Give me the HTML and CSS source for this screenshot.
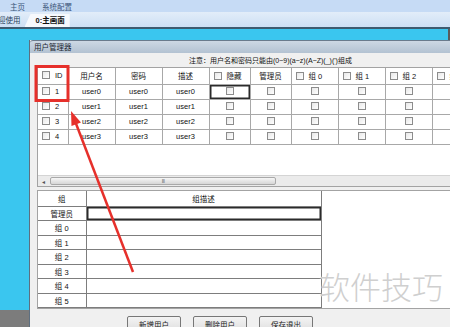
FILE: index.html
```html
<!DOCTYPE html>
<html lang="zh">
<head>
  <meta charset="UTF-8">
  <title>用户管理器</title>
  <link rel="stylesheet" href="styles.css">
</head>
<body>
  <div class="menubar">
    <span class="menu-item">主页</span>
    <span class="menu-item">系统配置</span>
  </div>
  <div class="tabbar">
    <span class="tab">迎使用</span>
    <span class="tab active">0:主画面</span>
  </div>
  <div class="desk">
    <div class="desk-top"></div>
    <div class="desk-main">
      <div class="desk-side">
        <div class="side-cyan"></div>
        <div class="side-grey"></div>
      </div>
      <div class="window">
        <div class="win-title">用户管理器</div>
        <div class="win-body">
          <div class="note">注意：用户名和密码只能由(0~9)(a~z)(A~Z)(_)(')组成</div>

          <div class="panel user-panel">
            <table class="grid users">
              <colgroup>
                <col style="width:30px"><col style="width:47px"><col style="width:47px"><col style="width:47px">
                <col style="width:41px"><col style="width:41px"><col style="width:47px"><col style="width:47px">
                <col style="width:47px"><col style="width:47px">
              </colgroup>
              <thead>
                <tr>
                  <th class="left"><span class="cb"></span>ID</th>
                  <th>用户名</th>
                  <th>密码</th>
                  <th>描述</th>
                  <th class="left"><span class="cb"></span>隐藏</th>
                  <th>管理员</th>
                  <th class="left"><span class="cb"></span>组 0</th>
                  <th class="left"><span class="cb"></span>组 1</th>
                  <th class="left"><span class="cb"></span>组 2</th>
                  <th class="left"><span class="cb"></span>组 3</th>
                </tr>
              </thead>
              <tbody id="user-rows"></tbody>
            </table>
            <div class="spacer"></div>
            <div class="hscroll">
              <span class="arrow">◂</span>
              <div class="thumb"><span class="grip">III</span></div>
            </div>
          </div>

          <div class="panel group-panel">
            <table class="grid groups">
              <colgroup><col style="width:48px"><col style="width:235px"></colgroup>
              <thead>
                <tr><th>组</th><th>组描述</th></tr>
              </thead>
              <tbody id="group-rows"></tbody>
            </table>
          </div>

          <div class="actions">
            <button class="btn">新增用户</button>
            <button class="btn">删除用户</button>
            <button class="btn">保存退出</button>
          </div>
        </div>
      </div>
    </div>
  </div>

  <svg class="annot" width="450" height="327" viewBox="0 0 450 327">
    <rect x="36" y="66.5" width="32" height="34" fill="none" stroke="#e6302b" stroke-width="3"/>
    <line x1="133" y1="272" x2="75" y2="121" stroke="#e6302b" stroke-width="2.5"/>
    <polygon points="71,111 81,122.5 71.5,126" fill="#e6302b"/>
  </svg>
  <div class="watermark">软件技巧</div>

  <script>
    // 用户表
    const users = ['user0', 'user1', 'user2', 'user3'];
    const ubody = document.getElementById('user-rows');
    users.forEach((u, i) => {
      const tr = document.createElement('tr');
      const sel = i === 0 ? ' class="sel"' : '';
      tr.innerHTML = `<td class="left"><span class="cb"></span>${i + 1}</td>
                      <td>${u}</td><td>${u}</td><td>${u}</td>
                      <td${sel}><span class="cb"></span></td>
                      <td><span class="cb"></span></td>
                      <td><span class="cb"></span></td>
                      <td><span class="cb"></span></td>
                      <td><span class="cb"></span></td>
                      <td><span class="cb"></span></td>`;
      ubody.appendChild(tr);
    });

    // 组表
    const groups = ['管理员', '组 0', '组 1', '组 2', '组 3', '组 4', '组 5'];
    const gbody = document.getElementById('group-rows');
    groups.forEach((g, i) => {
      const tr = document.createElement('tr');
      tr.innerHTML = `<td>${g}</td><td${i === 0 ? ' class="sel"' : ''}></td>`;
      gbody.appendChild(tr);
    });
  </script>
</body>
</html>
```

FILE: styles.css
```css
body {
  margin: 0;
  width: 450px;
  height: 327px;
  overflow: hidden;
  position: relative;
  font-family: "Liberation Sans", "Noto Sans CJK SC", sans-serif;
  font-size: 7.5px;
  color: #111;
  background: #3ac6ef;
}

.menubar {
  height: 12px;
  background: #c6dbf5;
  display: flex;
  align-items: center;
  gap: 17px;
  padding-left: 10px;
}
.menu-item { color: #3a5478; }

.tabbar {
  height: 15px;
  background: linear-gradient(#e2edf9, #cddff4);
  display: flex;
  align-items: flex-end;
}
.tab {
  height: 13px;
  line-height: 13px;
  padding: 0 2px 0 0;
  color: #2a3f5c;
  margin-left: -2px;
}
.tab.active {
  background: #f6f9fd;
  color: #111;
  padding: 0 5px 0 11px;
  margin-left: 2px;
  clip-path: polygon(6px 0, 100% 0, 100% 100%, 0 100%);
  font-weight: bold;
}

.desk { border-top: 2px solid #3e5b70; }
.desk-top {
  height: 11px;
  background: #3ac6ef;
  border-right: 2px solid #5b5b5b;
}
.desk-main { display: flex; height: 287px; }
.desk-side { width: 29px; display: flex; flex-direction: column; flex-shrink: 0; }
.side-cyan { flex: 1; background: #3ac6ef; }
.side-grey { height: 17px; background: #7c7c7c; }

.window {
  flex: 1;
  display: flex;
  flex-direction: column;
  border-left: 1px solid #5d6f80;
  background: #f0f0f0;
  min-width: 0;
}
.win-title {
  height: 13px;
  line-height: 13px;
  padding-left: 4px;
  background: linear-gradient(#cdd8e4, #b3c2d2);
  border-top: 1px solid #6a7b8c;
  border-top-left-radius: 3px;
  color: #1b2530;
  box-sizing: border-box;
}
.win-body {
  flex: 1;
  display: flex;
  flex-direction: column;
  padding-left: 7px;
  min-width: 0;
}
.note {
  height: 14px;
  line-height: 16px;
  padding-left: 152px;
  font-size: 7px;
  white-space: nowrap;
}

.panel {
  background: #fff;
  border: 1px solid #a3a3a3;
  border-right: none;
  overflow: hidden;
}
.user-panel {
  height: 120px;
  box-sizing: border-box;
  display: flex;
  flex-direction: column;
}
.group-panel {
  height: 119px;
  box-sizing: border-box;
  margin-top: 3px;
}

.grid {
  border-collapse: collapse;
  table-layout: fixed;
}
.grid th, .grid td {
  padding: 0;
  text-align: center;
  font-weight: normal;
  white-space: nowrap;
  overflow: hidden;
}
.users { width: 441px; }
.users th, .users td { border: 1px solid #a8a8a8; }
.users thead tr { height: 16px; }
.users tbody tr { height: 15px; }
.users .left { text-align: left; padding-left: 4px; }
.users th:first-child, .users td:first-child { border-left: none; }
.users thead th { border-top: none; }

.groups { width: 283px; }
.groups th, .groups td { border: 1px solid #7d7d7d; }
.groups thead tr { height: 15px; }
.groups tbody tr { height: 14.5px; }
.groups th:first-child, .groups td:first-child { border-left: none; }
.groups thead th { border-top: none; }

.sel { box-shadow: inset 0 0 0 1.5px #2b2b2b; }

.cb {
  display: inline-block;
  width: 6px;
  height: 6px;
  border: 1px solid #8c8c8c;
  background: linear-gradient(135deg, #e8e8e8, #fff);
  vertical-align: -1px;
  margin-right: 5px;
}
.users tbody td:not(.left) .cb { margin-right: 0; }

.spacer { flex: 1; }
.hscroll {
  height: 10px;
  background: #ebebeb;
  border-top: 1px solid #d4d4d4;
  display: flex;
  align-items: center;
}
.arrow {
  width: 11px;
  text-align: center;
  font-size: 6px;
  color: #555;
}
.thumb {
  width: 226px;
  height: 8px;
  margin-left: 1px;
  background: linear-gradient(#f6f6f6, #d6d6d6);
  border: 1px solid #a9a9a9;
  border-radius: 2px;
  box-sizing: border-box;
  display: flex;
  justify-content: center;
  align-items: center;
}
.grip { font-size: 5px; color: #666; letter-spacing: -0.5px; }

.actions {
  display: flex;
  gap: 12px;
  padding-left: 90px;
  margin-top: 7px;
}
.btn {
  width: 54px;
  height: 16px;
  font-family: inherit;
  font-size: 7.5px;
  color: #222;
  background: linear-gradient(#f4f4f4, #dedede);
  border: 1px solid #777;
  border-radius: 2px;
  padding: 0;
}

.annot {
  position: absolute;
  top: 0;
  left: 0;
  pointer-events: none;
}
.watermark {
  position: absolute;
  left: 319px;
  top: 263px;
  font-family: "Noto Sans CJK SC", sans-serif;
  font-size: 31px;
  font-weight: 300;
  color: #cfcfcf;
  text-shadow: 0 0 2px #fff;
  pointer-events: none;
}
```
